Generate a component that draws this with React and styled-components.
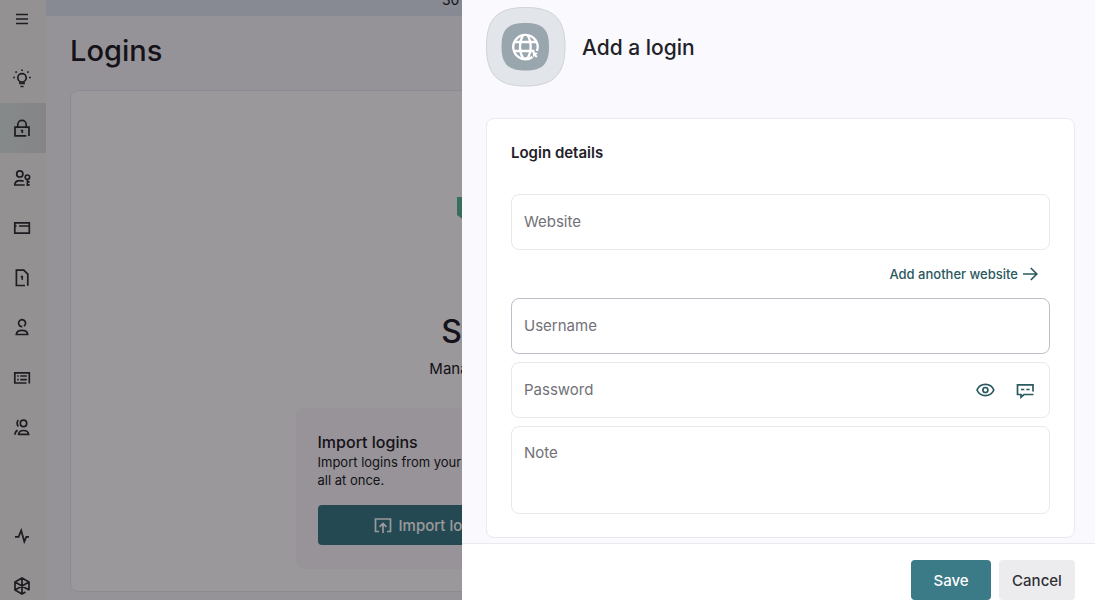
import styled, { createGlobalStyle, css } from 'styled-components';

const GlobalStyle = createGlobalStyle`
  * {
    box-sizing: border-box;
  }
  body {
    margin: 0;
    overflow: hidden;
    background: #f9f6fa;
    color: #222127;
    font-family: Inter, 'Liberation Sans', sans-serif;
  }
  button,
  input,
  textarea {
    font-family: inherit;
  }
  h1,
  h2,
  h3,
  p {
    margin: 0;
  }
`;

const Page = styled.div`
  display: flex;
  height: 100vh;
  overflow: hidden;
`;

const Sidebar = styled.nav`
  display: flex;
  flex-direction: column;
  flex: 0 0 46px;
  background: #f4f2f0;
`;

const NavGroup = styled.div`
  display: flex;
  flex-direction: column;
  ${(props) =>
    props.$bottom &&
    css`
      margin-top: 58px;
    `}
`;

const NavButton = styled.button`
  display: flex;
  flex: none;
  align-items: center;
  justify-content: center;
  width: 100%;
  height: 50px;
  padding: 0 2px 0 0;
  border: none;
  background: ${(props) =>
    props.$active ? 'linear-gradient(90deg, #dbe6e2, #dedddc)' : 'transparent'};
  color: #302f34;
  ${(props) =>
    props.$menu &&
    css`
      height: 38px;
      margin-bottom: 15px;
    `}
`;

const Main = styled.main`
  display: flex;
  flex: 1;
  flex-direction: column;
  min-width: 0;
`;

const Banner = styled.div`
  display: flex;
  flex: none;
  align-items: flex-end;
  justify-content: center;
  height: 16px;
  padding-bottom: 12px;
  overflow: hidden;
  background: #dfe7f0;
  font-size: 14px;
  line-height: 8px;
`;

const PageTitle = styled.h1`
  padding: 14px 24px 18px;
  font-size: 29px;
  font-weight: 500;
  line-height: 42px;
`;

const EmptyCard = styled.section`
  display: flex;
  flex-direction: column;
  align-items: center;
  height: 502px;
  margin: 0 24px;
  padding-top: 104px;
  border: 1px solid #eae8ee;
  border-radius: 8px;
  background: #fffdff;
`;

const Illustration = styled.svg`
  width: 228px;
  height: 112px;
`;

const EmptyTitle = styled.h2`
  font-size: 32px;
  font-weight: 500;
  line-height: 50px;
`;

const EmptyText = styled.p`
  font-size: 15px;
  line-height: 24px;
`;

const Options = styled.div`
  display: flex;
  gap: 6px;
  margin-top: 27px;
`;

const Option = styled.div`
  width: 272px;
  padding: 24px 22px;
  border-radius: 8px;
  background: #faf6fa;
`;

const OptionTitle = styled.h3`
  font-size: 16px;
  font-weight: 500;
  line-height: 21px;
`;

const OptionText = styled.p`
  font-size: 13px;
  line-height: 18px;
`;

const Overlay = styled.div`
  position: fixed;
  inset: 0;
  background: rgba(3, 1, 6, 0.4);
`;

const Drawer = styled.aside`
  position: fixed;
  top: 0;
  right: 0;
  bottom: 0;
  display: flex;
  flex-direction: column;
  width: 633px;
  max-width: 100%;
  background: #f9f9fe;
`;

const DrawerBody = styled.div`
  flex: 1;
  min-height: 0;
  padding: 7px 20px 0 24px;
  overflow: hidden;
`;

const DrawerHeader = styled.header`
  display: flex;
  align-items: center;
  gap: 16px;
  margin-bottom: 31px;
`;

const DrawerTitle = styled.h2`
  font-size: 21px;
  font-weight: 500;
`;

const FormCard = styled.form`
  display: flex;
  flex-direction: column;
  gap: 8px;
  padding: 24px 24px 23px;
  border: 1px solid #e9e9f1;
  border-radius: 8px;
  background: #fff;
`;

const FormTitle = styled.h3`
  margin-bottom: 23px;
  font-size: 15px;
  font-weight: 600;
  line-height: 20px;
`;

const Field = styled.div`
  display: flex;
  align-items: center;
  height: 56px;
  padding: 0 12px;
  border: 1px solid ${(props) => (props.$active ? '#bcc0c8' : '#e8e8ef')};
  border-radius: 8px;
  background: #fff;
  ${(props) =>
    props.$tall &&
    css`
      align-items: flex-start;
      height: 88px;
      padding-top: 16px;
    `}
`;

const inputStyle = css`
  flex: 1;
  min-width: 0;
  padding: 0;
  border: none;
  outline: none;
  background: transparent;
  color: #1b1b22;
  font-size: 15px;
  line-height: 20px;
  &::placeholder {
    color: #717177;
    opacity: 1;
  }
`;

const TextInput = styled.input`
  ${inputStyle}
`;

const TextArea = styled.textarea`
  ${inputStyle}
  height: 56px;
  resize: none;
`;

const FieldButton = styled.button`
  display: flex;
  align-items: center;
  justify-content: center;
  width: 40px;
  height: 40px;
  margin-right: ${(props) => (props.$last ? '-8px' : '0')};
  padding: 0;
  border: none;
  background: transparent;
  color: #2b5960;
`;

const AddLink = styled.a`
  display: flex;
  align-items: center;
  align-self: flex-end;
  height: 32px;
  padding-right: 8px;
  color: #2b5960;
  font-size: 13px;
  font-weight: 500;
  text-decoration: none;
`;

const Footer = styled.footer`
  display: flex;
  justify-content: flex-end;
  gap: 8px;
  padding: 16px 20px 0;
  border-top: 1px solid #e9e9f0;
  background: #fff;
`;

const Button = styled.button`
  display: flex;
  align-items: center;
  justify-content: center;
  gap: 4px;
  min-width: 76px;
  height: 40px;
  padding: 0 12px;
  border: none;
  border-radius: 4px;
  background: #ececef;
  color: #303036;
  font-size: 15px;
  font-weight: 500;
  ${(props) =>
    props.$primary &&
    css`
      min-width: 80px;
      background: #3b7a87;
      color: #fff;
    `}
  ${(props) =>
    props.$full &&
    css`
      width: 100%;
      margin-top: 16px;
    `}
`;

const Svg = styled.svg`
  display: block;
  flex: none;
  width: 24px;
  height: 24px;
  fill: none;
  stroke: currentColor;
  stroke-width: 1.7;
`;

const icons = {
  menu: <path d="M6 7.5h12M6 12h12M6 16.5h12" />,
  tips: (
    <>
      <circle cx="12" cy="11.8" r="4.2" />
      <path d="M10 15.8v1.6h4v-1.6M10.5 20.5h3M12 3.5V5M5.500 5.500l1.200 1.200M18.500 5.500l-1.200 1.200M3.200 11.500h1.800M19 11.500h1.800" />
    </>
  ),
  lock: (
    <>
      <path d="M16.300 19.900H5v-8.700h14V20M7.800 11.200V8.600a4.200 4.200 0 0 1 8.400 0v2.600" />
      <path d="M10.800 14.500h1.500v2.600" />
    </>
  ),
  passkey: (
    <>
      <circle cx="9.800" cy="7.900" r="3.100" />
      <path d="M14.700 19H4.800c0-3 2-4.400 5.200-4.400 1.600 0 2.800.2 3.700.8" />
      <circle cx="17.400" cy="11.200" r="2.200" />
      <path d="M17.400 13.400v6.600M17.400 15.800h2.300M17.400 18.800h2.300" />
    </>
  ),
  card: <path d="M4.800 6.800h14.500v10.400H4.800zM4.800 10h1.800M9 10h10.300" />,
  doc: (
    <>
      <path d="M15 19.500H6.400V4.200h7.400l4 4v11.600" />
      <path d="M10.700 10.500h1.500v3.200" />
    </>
  ),
  person: (
    <>
      <path d="M12.300 10.700A3.500 3.500 0 1 1 15.300 8.600" />
      <path d="M15.300 8.600l-1.200 1.600" />
      <path d="M6.300 18.500c.2-3 2.200-4.200 5.700-4.200s5.500 1.200 5.700 4.200z" />
    </>
  ),
  list: (
    <path d="M16.500 17H4.800V6.800h14.500v10.800M7.300 10h1.500M10.300 10h6.500M7.300 13.700h1.500M10.300 13.700h6.500" />
  ),
  people: (
    <>
      <circle cx="13.500" cy="7.400" r="3.200" />
      <path d="M8.300 4a5.500 5.500 0 0 0 0 6.500" />
      <path d="M8.600 18.400c.2-2.700 1.900-3.900 4.900-3.900s4.900 1.200 5.100 3.900zM7.600 14.200c-1.600.8-2.500 2.200-2.700 4.600" />
    </>
  ),
  activity: <path d="M5 12.800h3.600l2.600-6.400 3.100 11.200 2-4.800H19" />,
  hexagon: (
    <path d="M15.500 18L12 20l-7-4V8l7-4 7 4v8.200M5 8l14 8M19 8L5 16M12 4v16" />
  ),
  eye: (
    <>
      <path d="M4 12c1.600-3.800 4.400-5.600 8.400-5.600s6.800 1.800 8.400 5.600c-1.600 3.800-4.400 5.600-8.400 5.600S5.600 15.800 4 12z" />
      <circle cx="12.400" cy="12" r="2.500" />
    </>
  ),
  generate: (
    <>
      <path d="M20 13.500V6.800H4.500v9.700H8v2.700l3-2.700h9.500" />
      <path d="M8 11.500h3.300M13.300 11.500h3.300" />
    </>
  ),
  arrow: <path d="M5 12h13.500M12.800 6l6 6-6 6" />,
  upload: (
    <path d="M8 18.500H4.500V6h15v12.500H16M12 20v-9M8.600 13.800L12 10.400l3.400 3.400" />
  ),
};

const Icon = ({ name }) => (
  <Svg viewBox="0 0 24 24" aria-hidden="true">
    {icons[name]}
  </Svg>
);

const GlobeBadge = () => (
  <svg width="80" height="80" viewBox="0 0 80 80" aria-hidden="true">
    <path
      d="M39.500.5C67.500.5 79 11.500 79 39.500S67.500 79 39.500 79 .5 67.500.5 39.500 11.500.5 39.500.5z"
      fill="#e2e5ea"
      stroke="#cfd2d7"
    />
    <path
      d="M39.500 16c17.500 0 23.500 6.500 23.500 23.500S57 63.500 39.500 63.500 15.500 57 15.500 39.500 22 16 39.500 16z"
      fill="#9aa6ad"
    />
    <g fill="none" stroke="#fff" strokeWidth="2.300">
      <path d="M46.500 50A12.200 12.200 0 1 1 51 44" />
      <path d="M37 28.200c-4 6.500-4 16.500 0 23M41.500 28.200c4.200 6.500 4.200 16.500 0 23M28.500 35h22M28.500 44h20M37 51.500h6" />
    </g>
    <path d="M46.500 44.500l5.500 1.800-2 1.200 1.500 1.800-1.400 1.400-1.800-1.800-1 1.600z" fill="#fff" />
  </svg>
);

const navItems = [
  { icon: 'tips', label: 'Tips' },
  { icon: 'lock', label: 'Logins', active: true },
  { icon: 'passkey', label: 'Passkeys' },
  { icon: 'card', label: 'Payments' },
  { icon: 'doc', label: 'Secure notes' },
  { icon: 'person', label: 'Personal info' },
  { icon: 'list', label: 'IDs' },
  { icon: 'people', label: 'Sharing' },
];

const App = () => (
  <>
    <GlobalStyle />
    <Page>
      <Sidebar>
        <NavButton $menu aria-label="Menu">
          <Icon name="menu" />
        </NavButton>
        <NavGroup>
          {navItems.map((item) => (
            <NavButton key={item.icon} $active={item.active} aria-label={item.label}>
              <Icon name={item.icon} />
            </NavButton>
          ))}
        </NavGroup>
        <NavGroup $bottom>
          <NavButton aria-label="Password health">
            <Icon name="activity" />
          </NavButton>
          <NavButton aria-label="Dark web monitoring">
            <Icon name="hexagon" />
          </NavButton>
        </NavGroup>
      </Sidebar>
      <Main>
        <Banner>30 days left on your free Premium trial!</Banner>
        <PageTitle>Logins</PageTitle>
        <EmptyCard>
          <Illustration viewBox="0 0 228 112" aria-hidden="true">
            <path d="M0 2h228v24H8l-8-6z" fill="#5bb995" />
          </Illustration>
          <EmptyTitle>Store your logins</EmptyTitle>
          <EmptyText>Manage your logins in one secure place</EmptyText>
          <Options>
            <Option>
              <OptionTitle>Import logins</OptionTitle>
              <OptionText>Import logins from your other apps all at once.</OptionText>
              <Button $primary $full>
                <Icon name="upload" />
                Import logins
              </Button>
            </Option>
            <Option>
              <OptionTitle>Add a login</OptionTitle>
              <OptionText>Enter the details of a login yourself, one at a time.</OptionText>
              <Button $primary $full>
                Add login
              </Button>
            </Option>
          </Options>
        </EmptyCard>
      </Main>
    </Page>
    <Overlay />
    <Drawer role="dialog" aria-labelledby="drawer-title">
      <DrawerBody>
        <DrawerHeader>
          <GlobeBadge />
          <DrawerTitle id="drawer-title">Add a login</DrawerTitle>
        </DrawerHeader>
        <FormCard id="login-form">
          <FormTitle>Login details</FormTitle>
          <Field>
            <TextInput aria-label="Website" placeholder="Website" />
          </Field>
          <AddLink href="#website">
            Add another website
            <Icon name="arrow" />
          </AddLink>
          <Field $active>
            <TextInput aria-label="Username" placeholder="Username" />
          </Field>
          <Field>
            <TextInput type="password" aria-label="Password" placeholder="Password" />
            <FieldButton type="button" aria-label="Show password">
              <Icon name="eye" />
            </FieldButton>
            <FieldButton type="button" $last aria-label="Generate password">
              <Icon name="generate" />
            </FieldButton>
          </Field>
          <Field $tall>
            <TextArea aria-label="Note" placeholder="Note" />
          </Field>
        </FormCard>
      </DrawerBody>
      <Footer>
        <Button $primary type="submit" form="login-form">
          Save
        </Button>
        <Button type="button">Cancel</Button>
      </Footer>
    </Drawer>
  </>
);

export default App;
